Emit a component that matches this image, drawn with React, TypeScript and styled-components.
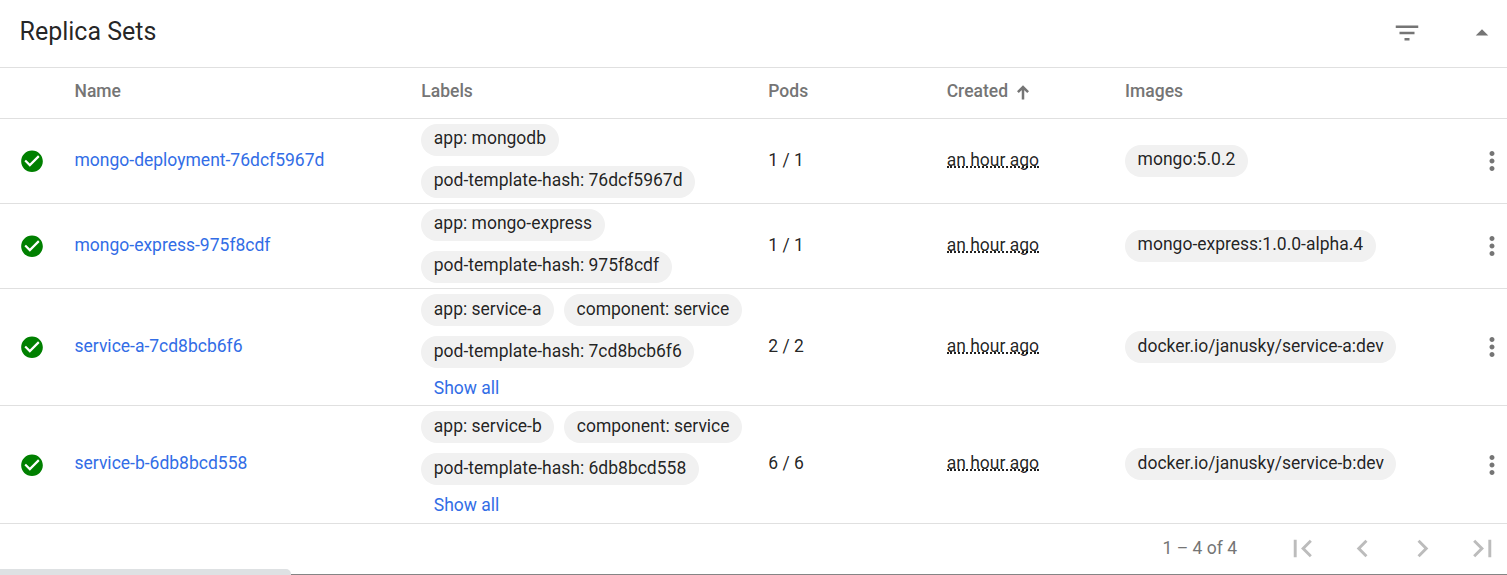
import React from "react";
import styled, { createGlobalStyle } from "styled-components";

const GlobalStyle = createGlobalStyle`
  * { box-sizing: border-box; }
  html, body { margin: 0; background: #fff; }
`;

const Card = styled.section`
  display: flex;
  flex-direction: column;
  height: 575px;
  overflow: hidden;
  font-family: Roboto, sans-serif;
  font-size: 17.5px;
  color: rgba(0, 0, 0, 0.87);
  background: #fff;
`;

const TitleBar = styled.header`
  display: flex;
  align-items: center;
  height: 68px;
  padding: 0 10px 2px 19.5px;
  border-bottom: 1px solid #e0e0e0;
`;

const Title = styled.h1`
  flex: 1;
  margin: 0;
  padding-bottom: 2px;
  font-size: 25px;
  font-weight: 400;
  line-height: 32px;
`;

const TitleActions = styled.div`
  display: flex;
  gap: 45px;
  color: #757575;
`;

const Icon = styled.svg<{ $size: number }>`
  display: block;
  flex: none;
  width: ${(p) => p.$size}px;
  height: ${(p) => p.$size}px;
  fill: currentColor;
`;

const Row = styled.div<{ $height: number }>`
  display: grid;
  grid-template-columns: 54.5px 346.8px 347px 178.4px 178.4px 351.9px 30px;
  align-items: center;
  height: ${(p) => p.$height}px;
  padding-left: 20px;
  border-bottom: 1px solid #e0e0e0;
`;

const HeadCell = styled.div`
  display: flex;
  align-items: center;
  gap: 9px;
  padding-bottom: 4px;
  line-height: 20px;
  font-weight: 500;
  color: #757575;
`;

const SortArrow = styled.svg`
  width: 12px;
  height: 15px;
  margin-top: 2px;
  fill: none;
  stroke: currentColor;
  stroke-width: 2.5;
`;

const Cell = styled.div<{ $lift: number }>`
  padding-bottom: ${(p) => p.$lift}px;
  line-height: 22px;
`;

const NameLink = styled.a`
  color: #326de6;
  text-decoration: none;
`;

const StatusIcon = styled(Icon)`
  margin: 0 0 0 -1px;
  color: #008000;
`;

const MenuButton = styled.div`
  color: #757575;
`;

const Age = styled.span`
  display: block;
  width: max-content;
  height: 19px;
  margin: 0 0 3px;
  border-bottom: 2px dotted rgba(0, 0, 0, 0.87);
  line-height: 22px;
`;

const Chips = styled.div`
  display: flex;
  flex-wrap: wrap;
  align-content: flex-start;
  align-self: stretch;
  gap: 10px;
  padding-top: 5px;
`;

const Chip = styled.span<{ $line: number }>`
  height: 32px;
  padding: 0 12.5px;
  border-radius: 16px;
  line-height: ${(p) => p.$line}px;
  background: #f1f1f1;
`;

const ImageCell = styled.div<{ $lift: number }>`
  display: flex;
  padding-bottom: ${(p) => p.$lift - 2}px;
`;

const ShowAll = styled.a`
  width: 100%;
  margin-top: -5px;
  padding-left: 12.5px;
  line-height: 30px;
  color: #326de6;
`;

const Paginator = styled.footer`
  display: flex;
  align-items: center;
  justify-content: flex-end;
  gap: 25px;
  height: 50px;
  padding: 0 7px 1px 0;
  color: #bcbcbc;
`;

const Range = styled.span`
  margin-right: 23px;
  padding-bottom: 1px;
  color: #757575;
`;

const Bottom = styled.div`
  display: flex;
  align-items: flex-end;
  margin-top: -5px;
  height: 6px;
`;

const LinkPreview = styled.div`
  width: 290.5px;
  height: 6px;
  border-radius: 0 5px 0 0;
  background: #dee1e3;
`;

const WindowEdge = styled.div`
  flex: 1;
  height: 1px;
  background: #858585;
`;

const paths = {
  filter: "M10 18h4v-2h-4v2zM3 6v2h18V6H3zm3 7h12v-2H6v2z",
  collapse: "M7 14l5-5 5 5z",
  more: "M12 8c1.1 0 2-.9 2-2s-.9-2-2-2-2 .9-2 2 .9 2 2 2zm0 2c-1.1 0-2 .9-2 2s.9 2 2 2 2-.9 2-2-.9-2-2-2zm0 6c-1.1 0-2 .9-2 2s.9 2 2 2 2-.9 2-2-.9-2-2-2z",
  check: "M12 2C6.48 2 2 6.48 2 12s4.48 10 10 10 10-4.48 10-10S17.52 2 12 2zm-2 15l-5-5 1.41-1.41L10 14.17l7.59-7.59L19 8l-9 9z",
  first: "M18.41 16.59L13.82 12l4.59-4.59L17 6l-6 6 6 6zM6 6h2v12H6z",
  prev: "M15.41 7.41L14 6l-6 6 6 6 1.41-1.41L10.83 12z",
  next: "M10 6L8.59 7.41 13.17 12l-4.58 4.59L10 18l6-6z",
  last: "M5.59 7.41L10.18 12l-4.59 4.59L7 18l6-6-6-6zM16 6h2v12h-2z",
};

function Glyph({ name, size }: { name: keyof typeof paths; size: number }) {
  return (
    <Icon $size={size} viewBox="0 0 24 24">
      <path d={paths[name]} />
    </Icon>
  );
}

const replicaSets = [
  { name: "mongo-deployment-76dcf5967d", labels: ["app: mongodb", "pod-template-hash: 76dcf5967d"], pods: "1 / 1", image: "mongo:5.0.2", more: false, height: 85, line: 29, lift: 2 },
  { name: "mongo-express-975f8cdf", labels: ["app: mongo-express", "pod-template-hash: 975f8cdf"], pods: "1 / 1", image: "mongo-express:1.0.0-alpha.4", more: false, height: 85, line: 29, lift: 2 },
  { name: "service-a-7cd8bcb6f6", labels: ["app: service-a", "component: service", "pod-template-hash: 7cd8bcb6f6"], pods: "2 / 2", image: "docker.io/janusky/service-a:dev", more: true, height: 117, line: 31, lift: 2 },
  { name: "service-b-6db8bcd558", labels: ["app: service-b", "component: service", "pod-template-hash: 6db8bcd558"], pods: "6 / 6", image: "docker.io/janusky/service-b:dev", more: true, height: 118, line: 31, lift: 4 },
];

export default function App() {
  return (
    <Card>
      <GlobalStyle />
      <TitleBar>
        <Title>Replica Sets</Title>
        <TitleActions>
          <Glyph name="filter" size={30} />
          <Glyph name="collapse" size={30} />
        </TitleActions>
      </TitleBar>
      <Row $height={51}>
        <span />
        <HeadCell>Name</HeadCell>
        <HeadCell>Labels</HeadCell>
        <HeadCell>Pods</HeadCell>
        <HeadCell>
          Created
          <SortArrow viewBox="0 0 12 15">
            <path d="M6 14.5V2M0.9 7.1L6 2l5.1 5.1" />
          </SortArrow>
        </HeadCell>
        <HeadCell>Images</HeadCell>
      </Row>
      {replicaSets.map((set) => (
        <Row key={set.name} $height={set.height}>
          <StatusIcon $size={26} viewBox="0 0 24 23.6">
            <path d={paths.check} />
          </StatusIcon>
          <Cell $lift={set.lift}>
            <NameLink>{set.name}</NameLink>
          </Cell>
          <Chips>
            {set.labels.map((label) => (
              <Chip key={label} $line={set.line}>{label}</Chip>
            ))}
            {set.more && <ShowAll>Show all</ShowAll>}
          </Chips>
          <Cell $lift={set.lift}>{set.pods}</Cell>
          <Cell $lift={set.lift}>
            <Age>an hour ago</Age>
          </Cell>
          <ImageCell $lift={set.lift}>
            <Chip $line={set.line}>{set.image}</Chip>
          </ImageCell>
          <MenuButton>
            <Glyph name="more" size={30} />
          </MenuButton>
        </Row>
      ))}
      <Paginator>
        <Range>1 – 4 of 4</Range>
        <Glyph name="first" size={35} />
        <Glyph name="prev" size={35} />
        <Glyph name="next" size={35} />
        <Glyph name="last" size={35} />
      </Paginator>
      <Bottom>
        <LinkPreview />
        <WindowEdge />
      </Bottom>
    </Card>
  );
}
